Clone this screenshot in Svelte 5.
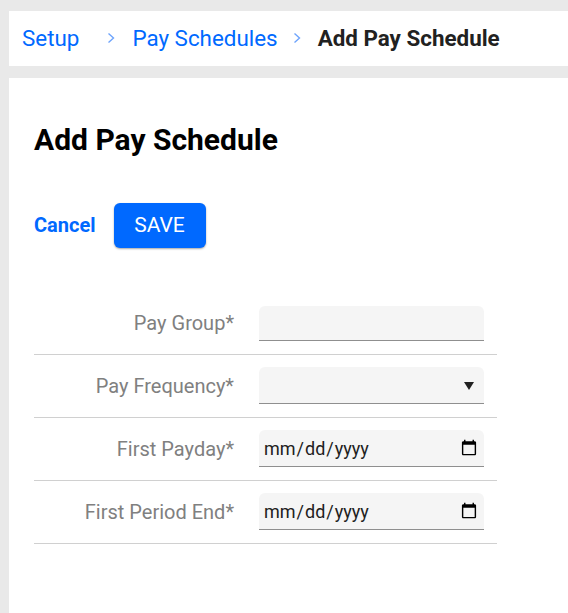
<script>
  let fields = [
    { label: 'Pay Group*', type: 'text' },
    { label: 'Pay Frequency*', type: 'select' },
    { label: 'First Payday*', type: 'date' },
    { label: 'First Period End*', type: 'date' }
  ];
</script>

<div class="page">
  <nav class="crumbs">
    <a href="#setup">Setup</a>
    <svg class="sep first-sep" viewBox="0 0 8 12" width="8" height="12"><path d="M1.5 1.5 6.5 6l-5 4.5" /></svg>
    <a href="#schedules">Pay Schedules</a>
    <svg class="sep" viewBox="0 0 8 12" width="8" height="12"><path d="M1.5 1.5 6.5 6l-5 4.5" /></svg>
    <span class="current">Add Pay Schedule</span>
  </nav>

  <main class="card">
    <h1>Add Pay Schedule</h1>

    <div class="actions">
      <a href="#cancel" class="cancel">Cancel</a>
      <button type="button" class="save">SAVE</button>
    </div>

    <form class="form">
      {#each fields as field}
        <div class="row">
          <label for={field.label}>{field.label}</label>
          {#if field.type === 'select'}
            <div class="select-wrap">
              <select id={field.label} class="control">
                <option value=""></option>
              </select>
              <svg class="arrow" viewBox="0 0 10 8" width="10" height="8"><path d="M0 0h10L5 8z" /></svg>
            </div>
          {:else}
            <input id={field.label} class="control" class:short={field.type === 'text'} type={field.type} />
          {/if}
        </div>
      {/each}
    </form>
  </main>
</div>

<style>
  :global(body) {
    background: #e9e9e9;
    font-family: Roboto, sans-serif;
  }

  .page {
    height: 613px;
    padding: 11px 0 0 9px;
    box-sizing: border-box;
    display: flex;
    flex-direction: column;
    gap: 12px;
    overflow: hidden;
  }

  .crumbs {
    height: 53px;
    padding: 0 0 2px 13px;
    flex: none;
    background: #fff;
    display: flex;
    align-items: center;
    font-size: 22.4px;
  }

  .crumbs a {
    color: #0069ff;
    text-decoration: none;
  }

  .sep {
    margin: 0 17px 0 15px;
    fill: none;
    stroke: #6ea4fc;
    stroke-width: 1.4;
  }

  .first-sep {
    margin-left: 28px;
    margin-right: 17px;
  }

  .current {
    font-weight: 700;
    color: #212121;
  }

  .card {
    flex: 1;
    background: #fff;
    padding: 0 25px;
  }

  h1 {
    margin: 44px 0 0;
    font-size: 30px;
    line-height: 36px;
    font-weight: 700;
    color: #000;
  }

  .actions {
    display: flex;
    align-items: center;
    gap: 18px;
    margin-top: 45px;
  }

  .cancel {
    color: #0069ff;
    font-size: 20px;
    font-weight: 700;
    text-decoration: none;
    margin-bottom: 2px;
  }

  .save {
    width: 92px;
    height: 45px;
    padding: 0 0 2px;
    border: 0;
    border-radius: 6px;
    background: #0069ff;
    color: #fff;
    font: 400 21px Roboto, sans-serif;
    box-shadow: 0 1px 2px rgba(0, 0, 0, 0.35);
  }

  .form {
    width: 463px;
    margin-top: 58px;
  }

  .row {
    display: flex;
    align-items: flex-start;
    height: 62px;
    border-bottom: 1px solid #d0d0d0;
  }

  .row:first-child {
    height: 48px;
  }

  label {
    width: 200px;
    flex: none;
    text-align: right;
    color: #808080;
    font-size: 20px;
    line-height: 36px;
    margin-top: 13px;
  }

  .row:first-child label {
    margin-top: -1px;
  }

  .select-wrap {
    position: relative;
    flex: none;
  }

  .arrow {
    position: absolute;
    right: 10px;
    top: 27px;
    fill: #212121;
    pointer-events: none;
  }

  .control {
    display: block;
    width: 225px;
    height: 37px;
    margin: 12px 0 0 25px;
    padding: 0 4px;
    box-sizing: border-box;
    border: 0;
    border-bottom: 1px solid #8f8f8f;
    border-radius: 6px 6px 0 0;
    background-color: #f5f5f5;
    color: #212121;
    font: 400 18px Roboto, sans-serif;
    outline: none;
    appearance: none;
  }

  input[type='date'].control {
    appearance: auto;
    padding-right: 4px;
  }

  .control.short {
    height: 35px;
    margin-top: 0;
  }
</style>
